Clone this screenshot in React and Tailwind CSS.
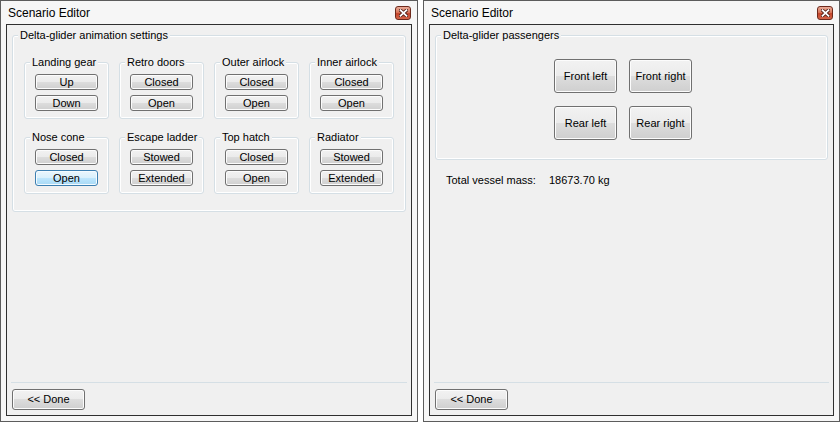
const font = { fontFamily: '"Liberation Sans", Arial, sans-serif' }

const animGroups = [
  { title: 'Landing gear', buttons: ['Up', 'Down'] },
  { title: 'Retro doors', buttons: ['Closed', 'Open'] },
  { title: 'Outer airlock', buttons: ['Closed', 'Open'] },
  { title: 'Inner airlock', buttons: ['Closed', 'Open'] },
  { title: 'Nose cone', buttons: ['Closed', 'Open'], hot: 1 },
  { title: 'Escape ladder', buttons: ['Stowed', 'Extended'] },
  { title: 'Top hatch', buttons: ['Closed', 'Open'] },
  { title: 'Radiator', buttons: ['Stowed', 'Extended'] },
]

function Button({ children, className = '', hot = false }) {
  return (
    <button
      className={
        'flex items-center justify-center rounded-[3px] border text-[11px] leading-[13px] text-black ' +
        (hot
          ? 'border-[#3c7fb1] bg-[linear-gradient(#eaf6fd_0%,#d9f0fc_50%,#bee6fd_50%,#a7d9f5_100%)] shadow-[inset_0_0_0_1px_#f4fbff] '
          : 'border-[#707070] bg-[linear-gradient(#f2f2f2_0%,#ebebeb_50%,#dddddd_50%,#cfcfcf_100%)] shadow-[inset_0_0_0_1px_#fcfcfc] ') +
        className
      }
    >
      {children}
    </button>
  )
}

function GroupBox({ title, className = '', children }) {
  return (
    <div className={'relative rounded-[3px] border border-[#d5dfe5] shadow-[inset_0_0_0_1px_#ffffff] ' + className}>
      <span className="absolute -top-[7px] left-[5px] bg-[#f0f0f0] px-[2px] text-[11px] leading-[13px] whitespace-nowrap text-black">
        {title}
      </span>
      {children}
    </div>
  )
}

function CloseButton() {
  return (
    <div className="flex h-[14px] w-[16px] items-center justify-center rounded-[3px] border border-[#6e2a1c] bg-[linear-gradient(#e9ab98_0%,#d8775c_45%,#c4442a_55%,#d3654a_100%)]">
      <svg width="9" height="8" viewBox="0 0 9 8">
        <path d="M1.5 1.2 L7.5 6.8 M7.5 1.2 L1.5 6.8" stroke="#4d1a10" strokeWidth="3.4" strokeLinecap="square" />
        <path d="M1.5 1.2 L7.5 6.8 M7.5 1.2 L1.5 6.8" stroke="#ffffff" strokeWidth="1.8" strokeLinecap="square" />
      </svg>
    </div>
  )
}

function Window({ width, children }) {
  return (
    <div className={'flex h-[422px] flex-col border border-[#5c5c5c] bg-[#f6f6f6] px-[5px] pb-[5px] ' + width}>
      <div className="flex h-[23px] items-center justify-between pl-[2px] pr-[1px]">
        <span className="text-[12px] leading-[16px] text-black">Scenario Editor</span>
        <CloseButton />
      </div>
      <div className="flex flex-1 flex-col border border-[#2f2f2f] bg-[#f0f0f0]">
        {children}
        <div className="flex-1" />
        <div className="mx-[4px] h-px bg-[#d5dfe5]" />
        <div className="mt-[6px] mb-[5px] pl-[5px]">
          <Button className="h-[21px] w-[73px]">&lt;&lt; Done</Button>
        </div>
      </div>
    </div>
  )
}

export default function App() {
  return (
    <div className="flex h-[422px] w-[840px] gap-[5px] bg-white" style={font}>
      <Window width="w-[418px]">
        <GroupBox title="Delta-glider animation settings" className="mx-[5px] mt-[10px] px-[11px] pt-[26px] pb-[17px]">
          <div className="grid grid-cols-4 gap-x-[10px] gap-y-[18px]">
            {animGroups.map((g) => (
              <GroupBox key={g.title} title={g.title} className="flex flex-col gap-[5px] px-[10px] pt-[11px] pb-[7px]">
                {g.buttons.map((b, i) => (
                  <Button key={b} hot={g.hot === i} className="h-[16px] w-[63px]">
                    {b}
                  </Button>
                ))}
              </GroupBox>
            ))}
          </div>
        </GroupBox>
      </Window>

      <Window width="w-[417px]">
        <GroupBox title="Delta-glider passengers" className="mx-[5px] mt-[10px] pl-[118px] pt-[23px] pb-[19px]">
          <div className="grid w-[138px] grid-cols-2 gap-x-[12px] gap-y-[13px]">
            {['Front left', 'Front right', 'Rear left', 'Rear right'].map((s) => (
              <Button key={s} className="h-[34px] w-[63px]">
                {s}
              </Button>
            ))}
          </div>
        </GroupBox>
        <div className="mt-[14px] flex px-[16px] text-[11px] leading-[13px] text-black">
          <span className="w-[103px]">Total vessel mass:</span>
          <span>18673.70 kg</span>
        </div>
      </Window>
    </div>
  )
}
